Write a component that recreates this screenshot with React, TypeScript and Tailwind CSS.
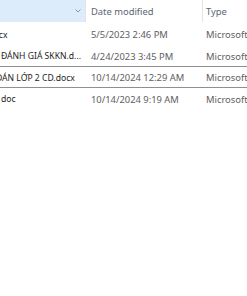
const rows = [
  { name: ".docx", date: "5/5/2023 2:46 PM", type: "Microsoft Word Document", shift: "-ml-[14px]" },
  { name: "ĐÁNH GIÁ SKKN.d...", date: "4/24/2023 3:45 PM", type: "Microsoft Word Document", shift: "ml-[1px]" },
  { name: "ĐÁN LỚP 2 CD.docx", date: "10/14/2024 12:29 AM", type: "Microsoft Word Document", shift: "-ml-[4px]" },
  { name: "doc", date: "10/14/2024 9:19 AM", type: "Microsoft Word Document", shift: "ml-[1px]" },
];

export default function App() {
  return (
    <div className="w-[247px] h-[296px] bg-white overflow-hidden text-[9.4px] font-['Noto_Sans',sans-serif]">
      <div className="flex h-[22px] w-[330px]">
        <div className="w-[86px] shrink-0 bg-[#dcecfa] flex items-center justify-end pr-[3px] border-r border-[#e3e3e3]">
          <svg width="8" height="8" viewBox="0 0 8 8" className="text-[#8a96a3]">
            <path d="M1.5 2.5 L4 5 L6.5 2.5" fill="none" stroke="currentColor" strokeWidth="1" />
          </svg>
        </div>
        <div className="w-[117px] shrink-0 pl-[5px] pt-[2px] flex items-center text-[#5a6573] border-r border-[#e3e3e3]">
          Date modified
        </div>
        <div className="flex-1 pl-[3px] pt-[2px] flex items-center text-[#5a6573]">Type</div>
      </div>
      <div className="pt-[1px]">
        {rows.map((r, i) => (
          <div
            key={i}
            className={
              "flex h-[21.5px] w-[330px] items-center pt-[3px] " +
              (i === 2 ? "border-y border-[#8f8f8f]" : "border-y border-transparent")
            }
          >
            <div className="w-[86px] shrink-0 overflow-hidden whitespace-nowrap text-[8.6px] text-[#1c1c1c]">
              <span className={"block " + r.shift}>{r.name}</span>
            </div>
            <div className="w-[117px] shrink-0 pl-[5px] whitespace-nowrap text-[#5e5e5e]">{r.date}</div>
            <div className="w-[120px] shrink-0 pl-[3px] whitespace-nowrap text-[#5e5e5e]">{r.type}</div>
          </div>
        ))}
      </div>
    </div>
  );
}
